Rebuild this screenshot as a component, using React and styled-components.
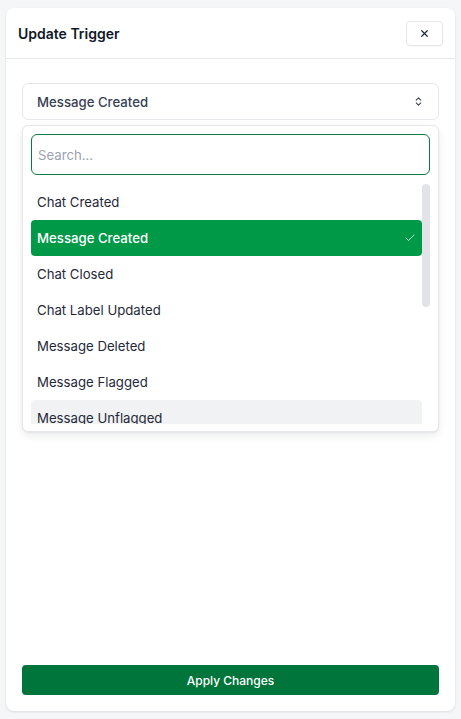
import React from "react";
import styled, { createGlobalStyle } from "styled-components";

const Global = createGlobalStyle`
  html, body, #root { height: 100%; }
  body {
    margin: 0;
    padding: 8px 6px;
    box-sizing: border-box;
    background: #f5f6f8;
    font-family: Inter, "Noto Sans", sans-serif;
    -webkit-font-smoothing: antialiased;
  }
  *, *::before, *::after { box-sizing: border-box; }
`;

const Card = styled.div`
  height: 100%;
  background: #ffffff;
  border-radius: 8px;
  box-shadow: 0 1px 3px rgba(15, 23, 42, 0.08), 0 1px 2px rgba(15, 23, 42, 0.04);
  display: flex;
  flex-direction: column;
`;

const Header = styled.div`
  height: 51px;
  padding: 0 12px;
  display: flex;
  align-items: center;
  justify-content: space-between;
  border-bottom: 1px solid #e5e7eb;
`;

const Title = styled.h2`
  margin: 0;
  font-size: 14px;
  font-weight: 600;
  color: #111827;
  padding-top: 1px;
`;

const CloseButton = styled.button`
  width: 37px;
  height: 25px;
  padding: 0;
  border: 1px solid #e5e7eb;
  border-radius: 4px;
  background: #fff;
  color: #1f2937;
  display: flex;
  align-items: center;
  justify-content: center;
  box-shadow: 0 1px 1px rgba(0, 0, 0, 0.03);
`;

const Body = styled.div`
  flex: 1;
  padding: 24px 16px 16px;
  display: flex;
  flex-direction: column;
`;

const SelectWrap = styled.div`
  position: relative;
`;

const Trigger = styled.button`
  width: 100%;
  height: 37px;
  padding: 0 14px;
  border: 1px solid #e5e7eb;
  border-radius: 6px;
  background: #fff;
  display: flex;
  align-items: center;
  justify-content: space-between;
  font-family: inherit;
  font-size: 13.2px;
  font-weight: 500;
  color: #374151;
`;

const Popover = styled.div`
  position: absolute;
  top: 42px;
  left: 0;
  right: 0;
  background: #fff;
  border: 1px solid #e5e7eb;
  border-radius: 6px;
  box-shadow: 0 4px 8px rgba(15, 23, 42, 0.08), 0 1px 2px rgba(15, 23, 42, 0.05);
  padding: 8px 8px 7px;
  z-index: 10;
`;

const SearchInput = styled.input`
  display: block;
  width: 100%;
  height: 41px;
  padding: 0 6px;
  border: 1px solid #0a7a3e;
  border-radius: 6px;
  outline: none;
  font-family: inherit;
  font-size: 13.2px;
  color: #111827;
  caret-color: #111827;
  margin-bottom: 9px;
  &::placeholder { color: #9ca3af; }
`;

const ListFrame = styled.div`
  position: relative;
`;

const List = styled.div`
  max-height: 240px;
  overflow-y: auto;
  padding-right: 8px;
  scrollbar-width: none;
  &::-webkit-scrollbar { display: none; }
`;

const ScrollThumb = styled.div`
  position: absolute;
  top: 0;
  right: 0;
  width: 8px;
  height: 123px;
  border-radius: 4px;
  background: #e2e3e7;
`;

const Item = styled.div`
  height: 36px;
  padding: 0 6px;
  border-radius: 4px;
  display: flex;
  align-items: center;
  justify-content: space-between;
  font-size: 13.2px;
  color: ${(p) => (p.$selected ? "#ffffff" : "#1f2937")};
  font-weight: ${(p) => (p.$selected ? 500 : 400)};
  background: ${(p) =>
    p.$selected ? "#009947" : p.$hover ? "#f1f2f4" : "transparent"};
`;

const Spacer = styled.div`
  flex: 1;
`;

const ApplyButton = styled.button`
  width: 100%;
  height: 30px;
  border: none;
  border-radius: 4px;
  background: #00753b;
  color: #fff;
  font-family: inherit;
  font-size: 12px;
  font-weight: 500;
`;

const options = [
  "Chat Created",
  "Message Created",
  "Chat Closed",
  "Chat Label Updated",
  "Message Deleted",
  "Message Flagged",
  "Message Unflagged",
  "Chat Assigned",
  "Chat Reopened",
  "Contact Created",
  "Contact Updated",
  "Label Added",
  "Label Removed",
];

const XIcon = () => (
  <svg width="11" height="11" viewBox="0 0 24 24" fill="none" stroke="currentColor" strokeWidth="2.6" strokeLinecap="round">
    <path d="M18 6 6 18" />
    <path d="m6 6 12 12" />
  </svg>
);

const ChevronsIcon = () => (
  <svg width="11" height="11" viewBox="0 0 24 24" fill="none" stroke="#374151" strokeWidth="2.2" strokeLinecap="round" strokeLinejoin="round">
    <path d="m7 15 5 5 5-5" />
    <path d="m7 9 5-5 5 5" />
  </svg>
);

const CheckIcon = () => (
  <svg width="12" height="12" viewBox="0 0 24 24" fill="none" stroke="#e8f5ee" strokeWidth="1.6" strokeLinecap="round" strokeLinejoin="round">
    <path d="M20 6 9 17l-5-5" />
  </svg>
);

export default function App() {
  return (
    <>
      <Global />
      <Card>
        <Header>
          <Title>Update Trigger</Title>
          <CloseButton aria-label="Close">
            <XIcon />
          </CloseButton>
        </Header>
        <Body>
          <SelectWrap>
            <Trigger>
              <span>Message Created</span>
              <ChevronsIcon />
            </Trigger>
            <Popover>
              <SearchInput placeholder="Search..." autoFocus />
              <ListFrame>
                <List>
                  {options.map((o, i) => (
                    <Item key={o} $selected={i === 1} $hover={i === 6}>
                      <span>{o}</span>
                      {i === 1 && <CheckIcon />}
                    </Item>
                  ))}
                </List>
                <ScrollThumb />
              </ListFrame>
            </Popover>
          </SelectWrap>
          <Spacer />
          <ApplyButton>Apply Changes</ApplyButton>
        </Body>
      </Card>
    </>
  );
}
